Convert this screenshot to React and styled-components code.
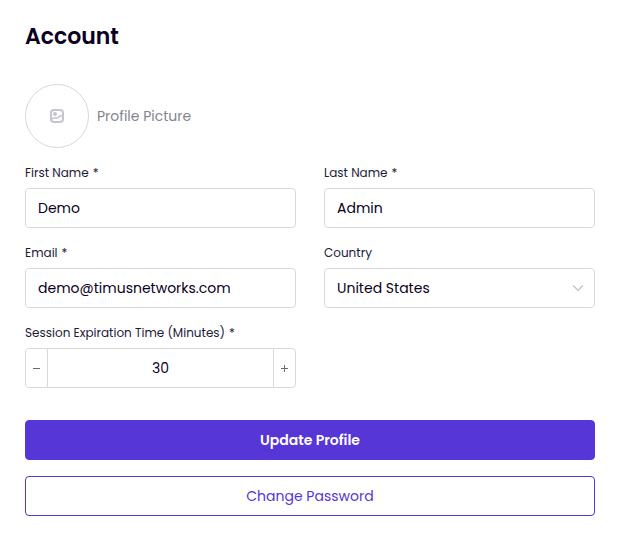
import React, { useState } from "react";
import styled, { createGlobalStyle } from "styled-components";

const GlobalStyle = createGlobalStyle`
  * {
    box-sizing: border-box;
  }
  body {
    margin: 0;
    background-color: #ffffff;
    color: #0b0022;
    font-family: Poppins, Inter, "Open Sans", sans-serif;
    font-size: 14px;
  }
`;

const Container = styled.main`
  padding: 20px 22px 20px 25px;
`;
const Title = styled.h1`
  margin: 0 0 30px;
  font-size: 22px;
  line-height: 34px;
  font-weight: 600;
`;
const Picture = styled.div`
  display: flex;
  align-items: center;
  gap: 8px;
  margin-bottom: 16px;
  color: #84848e;
`;
const Avatar = styled.button`
  display: flex;
  align-items: center;
  justify-content: center;
  width: 64px;
  height: 64px;
  padding: 0;
  border: 1px solid #d9d9d9;
  border-radius: 50%;
  background-color: white;
  color: #c5c5cf;
  cursor: pointer;
`;
const Fields = styled.div`
  display: grid;
  grid-template-columns: 1fr 1fr;
  gap: 16px 28px;
  margin-bottom: 32px;
`;
const Field = styled.div`
  display: flex;
  flex-direction: column;
  gap: 6px;
  min-width: 0;
`;
const Label = styled.label`
  display: flex;
  gap: 4px;
  color: #231a38;
  font-size: 12px;
  line-height: 18px;
  white-space: nowrap;
`;
const Input = styled.input`
  width: 100%;
  height: 40px;
  padding: 0 12px;
  border: 1px solid #d9d9d9;
  border-radius: 4px;
  background-color: white;
  color: inherit;
  font: inherit;
  outline: none;
`;
const SelectBox = styled.div`
  display: grid;
  align-items: center;

  > * {
    grid-area: 1 / 1;
  }
  > svg {
    justify-self: end;
    margin-right: 11px;
    pointer-events: none;
  }
`;
const Select = styled(Input)`
  appearance: none;
`;
const Stepper = styled.div`
  display: flex;
  height: 40px;
  border: 1px solid #d9d9d9;
  border-radius: 4px;
`;
const StepperInput = styled.input`
  flex: 1;
  min-width: 0;
  padding: 0;
  border: solid #d9d9d9;
  border-width: 0 1px;
  background-color: white;
  color: inherit;
  font: inherit;
  text-align: center;
  outline: none;
`;
const StepperButton = styled.button`
  display: flex;
  align-items: center;
  justify-content: center;
  width: 21px;
  padding: 0;
  border: none;
  background: none;
  color: #6d6678;
  cursor: pointer;
`;
const Actions = styled.div`
  display: flex;
  flex-direction: column;
  gap: 16px;
`;
const Button = styled.button`
  height: 40px;
  border: 1px solid #5636d6;
  border-radius: 4px;
  background-color: ${(props) => (props.$primary ? "#5636d6" : "white")};
  color: ${(props) => (props.$primary ? "white" : "#5636d6")};
  font: inherit;
  font-weight: ${(props) => (props.$primary ? 600 : 400)};
  cursor: pointer;
`;

function PictureIcon() {
  return (
    <svg width="14" height="14" viewBox="0 0 14 14" fill="none" stroke="currentColor" strokeWidth="2">
      <rect x="1" y="1" width="12" height="12" rx="3" />
      <circle cx="5" cy="5" r="2" fill="currentColor" stroke="none" />
      <path d="M1.5 10 4 9c.8-.4 1.300-.3 1.900 0 .7.3 1.300.2 1.900-.3L9.500 7.300c.700-.600 1.500-.600 2.200-.2l.8.4" strokeWidth="1.500" />
    </svg>
  );
}

function ChevronIcon() {
  return (
    <svg width="12" height="12" viewBox="0 0 12 12" fill="none" stroke="#bfbfc5" strokeWidth="1.2">
      <path d="M1 3.500 6 8.500l5-5" />
    </svg>
  );
}

function StepIcon({ plus }) {
  return (
    <svg width="9" height="9" viewBox="0 0 9 9" stroke="currentColor">
      <path d={plus ? "M1 4.500h7M4.500 1v7" : "M1 4.500h7"} />
    </svg>
  );
}

function FieldLabel({ htmlFor, required, children }) {
  return (
    <Label htmlFor={htmlFor}>
      {children}
      {required && <span>*</span>}
    </Label>
  );
}

function TextField({ id, label, type = "text", value }) {
  return (
    <Field>
      <FieldLabel htmlFor={id} required>{label}</FieldLabel>
      <Input id={id} type={type} defaultValue={value} required />
    </Field>
  );
}

export default function App() {
  const [minutes, setMinutes] = useState(30);

  return (
    <Container>
      <GlobalStyle />
      <Title>Account</Title>
      <form onSubmit={(e) => e.preventDefault()}>
        <Picture>
          <Avatar type="button" aria-labelledby="picture-label">
            <PictureIcon />
          </Avatar>
          <span id="picture-label">Profile Picture</span>
        </Picture>
        <Fields>
          <TextField id="first-name" label="First Name" value="Demo" />
          <TextField id="last-name" label="Last Name" value="Admin" />
          <TextField id="email" label="Email" type="email" value="demo@timusnetworks.com" />
          <Field>
            <FieldLabel htmlFor="country">Country</FieldLabel>
            <SelectBox>
              <Select as="select" id="country">
                <option>United States</option>
              </Select>
              <ChevronIcon />
            </SelectBox>
          </Field>
          <Field>
            <FieldLabel htmlFor="session" required>Session Expiration Time (Minutes)</FieldLabel>
            <Stepper>
              <StepperButton type="button" aria-label="Decrease" onClick={() => setMinutes(Math.max(1, Number(minutes) - 1))}>
                <StepIcon />
              </StepperButton>
              <StepperInput
                id="session"
                inputMode="numeric"
                required
                value={minutes}
                onChange={(e) => setMinutes(e.target.value)}
              />
              <StepperButton type="button" aria-label="Increase" onClick={() => setMinutes(Number(minutes) + 1)}>
                <StepIcon plus />
              </StepperButton>
            </Stepper>
          </Field>
        </Fields>
        <Actions>
          <Button $primary type="submit">Update Profile</Button>
          <Button type="button">Change Password</Button>
        </Actions>
      </form>
    </Container>
  );
}
